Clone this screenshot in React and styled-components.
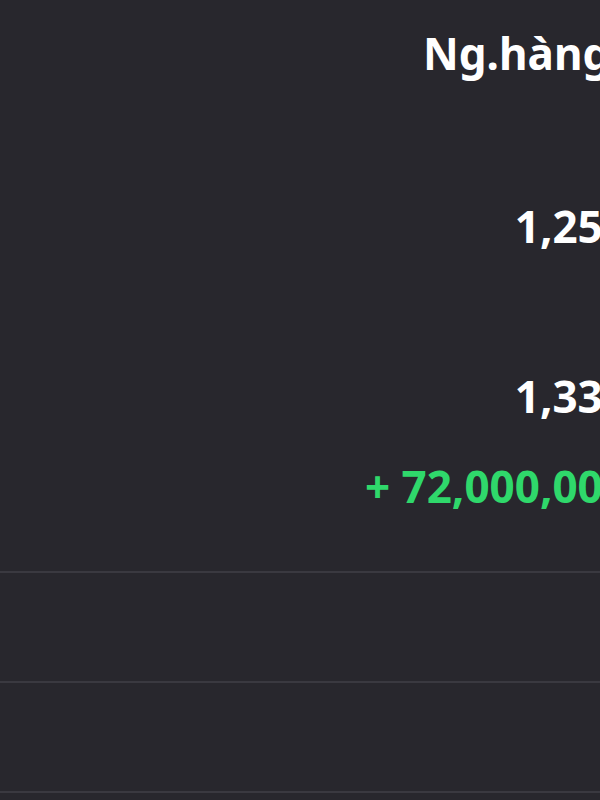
import React from "react";
import styled, { createGlobalStyle } from "styled-components";

const GlobalStyle = createGlobalStyle`
    html, body {
        margin: 0;
        padding: 0;
        background: #28272d;
        overflow: hidden;
    }
    * {
        box-sizing: border-box;
    }
`;

const Screen = styled.main`
    width: 740px;
    height: 800px;
    background: #28272d;
    font-family: "Noto Sans", "Open Sans", sans-serif;
    color: #ffffff;
`;

const Summary = styled.section`
    display: grid;
    grid-template-columns: 1fr 293px;
    padding: 23px 24px 55px 0;
`;

const HeadCell = styled.div`
    grid-column: 2;
    font-size: 44px;
    font-weight: 700;
    line-height: 60px;
    white-space: nowrap;
    text-align: left;
`;

const Values = styled.div`
    grid-column: 1 / span 2;
    display: flex;
    flex-direction: column;
    align-items: flex-end;
    padding-top: 113px;
`;

const Amount = styled.div`
    font-size: 44px;
    font-weight: 700;
    line-height: 60px;
    white-space: nowrap;
    color: ${({ $tone }) => ($tone === "up" ? "#2fd86b" : "#ffffff")};
    margin-top: ${({ $gap }) => $gap || 0}px;
`;

const EmptyRow = styled.div`
    height: 110px;
    border-top: 2px solid #3a3940;
`;

export default function App() {
    return (
        <>
            <GlobalStyle />
            <Screen>
                <Summary>
                    <HeadCell>Ng.hàng</HeadCell>
                    <Values>
                        <Amount>1,258,000</Amount>
                        <Amount $gap={110}>1,330,000</Amount>
                        <Amount $tone="up" $gap={30}>+ 72,000,000,000</Amount>
                    </Values>
                </Summary>
                <EmptyRow />
                <EmptyRow />
                <EmptyRow />
            </Screen>
        </>
    );
}
